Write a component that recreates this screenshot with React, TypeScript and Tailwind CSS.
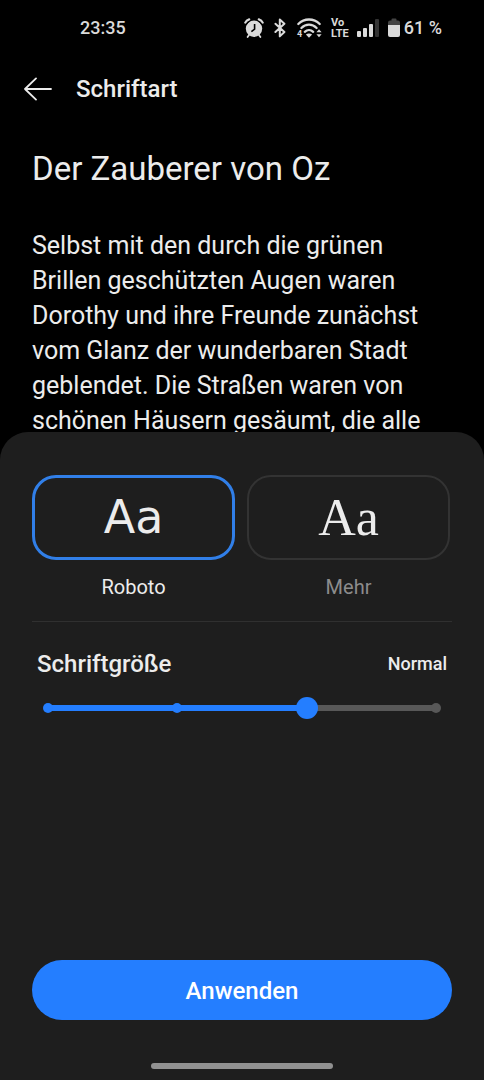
import { useState } from 'react';
import clsx from 'clsx';

const SIZES = ['Sehr klein', 'Klein', 'Normal', 'Groß'];

const FONTS = [
  { id: 'roboto', label: 'Roboto', sample: "font-['DejaVu_Sans',sans-serif] text-[46px]" },
  { id: 'more', label: 'Mehr', sample: "font-['Liberation_Serif',serif] text-[52px]" },
];

function AlarmIcon() {
  return (
    <svg viewBox="0 0 20 20" className="h-5 w-5" fill="none">
      <circle cx="10" cy="10.8" r="8.2" fill="#dadada" />
      <path d="M1.3 4.6Q2.4 2.2 5.2 1.4M18.7 4.6Q17.6 2.2 14.8 1.4" stroke="#dadada" strokeWidth="2.2" strokeLinecap="round" />
      <path d="M2.6 6.4Q4 4 6.6 2.6M17.4 6.4Q16 4 13.4 2.6" stroke="#000" strokeWidth="0.8" />
      <path d="m5 17-1.4 2M15 17l1.4 2" stroke="#dadada" strokeWidth="1.8" strokeLinecap="round" />
      <path d="M10.6 6v5.2L7.4 13.6" stroke="#000" strokeWidth="1.6" />
    </svg>
  );
}

function BluetoothIcon() {
  return (
    <svg viewBox="0 0 12 20" className="h-5 w-3" fill="none" stroke="#dadada" strokeWidth="2">
      <path d="m1.4 5.8 9 8.2-4.6 4.4V1.6l4.6 4.2-9 8.2" strokeLinejoin="round" strokeLinecap="round" />
    </svg>
  );
}

function WifiIcon() {
  return (
    <svg viewBox="0 0 27 22" className="h-[22px] w-[27px]" fill="none">
      <g stroke="#dadada" strokeWidth="2.3" strokeLinecap="round">
        <path d="M2.3 7c6-6 15.4-6 21.4 0" />
        <path d="M5.4 11c4.4-4.4 10.8-4.4 15.2 0" />
        <path d="M8.8 14.8c2.4-2.3 6-2.3 8.4 0" />
      </g>
      <path d="M9.9 17.6c1.9-1.5 4.3-1.5 6.2 0L13 20.8Z" fill="#dadada" />
      <path d="m20.4 15.2 2.6-3 2.6 3ZM20.4 17.2l2.6 3 2.6-3Z" fill="#dadada" />
      <text x="1" y="20" fill="#dadada" fontSize="9" fontWeight="700" fontFamily="Roboto, sans-serif">
        4
      </text>
    </svg>
  );
}

function SignalIcon() {
  return (
    <svg viewBox="0 0 24 20" className="h-5 w-6" fill="#dadada">
      <rect x="0" y="13" width="4" height="6" rx="1" />
      <rect x="6" y="10" width="4" height="9" rx="1" />
      <rect x="12" y="6" width="4" height="13" rx="1" />
      <rect x="18" y="1" width="4" height="18" rx="1" fill="#333" />
    </svg>
  );
}

function BatteryIcon() {
  return (
    <svg viewBox="0 0 12 20" className="h-5 w-3">
      <path d="M3.5 2.5v-1a1 1 0 0 1 1-1h3a1 1 0 0 1 1 1v1H10a2 2 0 0 1 2 2V8H0V4.5a2 2 0 0 1 2-2Z" fill="#444" />
      <path d="M0 7h12v10a2 2 0 0 1-2 2H2a2 2 0 0 1-2-2Z" fill="#dadada" />
    </svg>
  );
}

function StatusBar() {
  return (
    <div className="flex h-14 shrink-0 items-center justify-between pr-[42px] pl-20 text-[#dadada]">
      <span className="text-lg font-medium">23:35</span>
      <div className="flex items-center">
        <AlarmIcon />
        <span className="ml-[10px] flex">
          <BluetoothIcon />
        </span>
        <span className="ml-[10px] flex">
          <WifiIcon />
        </span>
        <span className="ml-2 flex flex-col text-[11px] leading-[11px] font-bold">
          <span>Vo</span>
          <span>LTE</span>
        </span>
        <span className="ml-2 flex">
          <SignalIcon />
        </span>
        <span className="ml-[7px] flex">
          <BatteryIcon />
        </span>
        <span className="ml-1 text-lg font-medium">61 %</span>
      </div>
    </div>
  );
}

function SizeSlider({ value, onChange }: { value: number; onChange: (v: number) => void }) {
  const last = SIZES.length - 1;

  return (
    <div className="relative mt-[17px] flex h-[22px] items-center">
      <div className="mx-[11px] h-[6px] flex-1 bg-[#585858]">
        <div className="h-full bg-[#247eff]" style={{ width: `${(value / last) * 100}%` }} />
      </div>
      <div className="absolute inset-x-[6px] flex justify-between">
        {SIZES.map((size, i) => (
          <span
            key={size}
            className={clsx('size-[10px] rounded-full', i <= value ? 'bg-[#247eff]' : 'bg-[#585858]')}
          />
        ))}
      </div>
      <input
        id="font-size"
        type="range"
        min={0}
        max={last}
        step={1}
        value={value}
        onChange={(e) => onChange(Number(e.target.value))}
        className="absolute inset-0 w-full appearance-none bg-transparent [&::-webkit-slider-thumb]:size-[22px] [&::-webkit-slider-thumb]:appearance-none [&::-webkit-slider-thumb]:rounded-full [&::-webkit-slider-thumb]:bg-[#247eff]"
      />
    </div>
  );
}

export default function App() {
  const [font, setFont] = useState('roboto');
  const [size, setSize] = useState(2);

  return (
    <div className="flex h-screen flex-col bg-black font-[Roboto,sans-serif] text-[#ececec]">
      <div className="flex min-h-0 flex-1 flex-col">
        <StatusBar />
        <header className="flex h-[66px] shrink-0 items-center gap-6 px-6">
          <button type="button" aria-label="Zurück">
            <svg viewBox="0 0 28 24" className="h-6 w-7" fill="none" stroke="currentColor" strokeWidth="1.8">
              <path d="M27 12H1M12 1.4 1 12l11 10.6" strokeLinecap="round" strokeLinejoin="round" />
            </svg>
          </button>
          <h1 className="text-2xl font-medium">Schriftart</h1>
        </header>
        <article className="pt-[27px] pr-12 pl-8">
          <h2 className="text-[33px] leading-10">Der Zauberer von Oz</h2>
          <p className="mt-[39px] text-[25px] leading-[35px]">
            Selbst mit den durch die grünen Brillen geschützten Augen waren Dorothy und ihre Freunde
            zunächst vom Glanz der wunderbaren Stadt geblendet. Die Straßen waren von schönen Häusern
            gesäumt, die alle
          </p>
        </article>
      </div>

      {/* slides over the last line of the preview */}
      <section className="relative flex h-3/5 shrink-0 flex-col rounded-t-[28px] bg-[#1e1e1e] px-8 pt-[43px]">
        <div className="flex gap-3 pr-[2px]">
          {FONTS.map(({ id, label, sample }) => (
            <button
              key={id}
              type="button"
              aria-pressed={font === id}
              onClick={() => setFont(id)}
              className="flex flex-1 flex-col items-center gap-3"
            >
              <span
                className={clsx(
                  'flex h-[85px] w-full items-center justify-center rounded-3xl',
                  font === id ? 'border-3 border-[#317fe8]' : 'border-2 border-[#333]',
                  sample,
                )}
              >
                Aa
              </span>
              <span className={clsx('text-xl leading-[30px]', font !== id && 'text-[#8c8c8c]')}>{label}</span>
            </button>
          ))}
        </div>

        <div className="mt-[19px] border-t border-[#303030] px-[5px] pt-[26px]">
          <div className="flex items-center justify-between">
            <label htmlFor="font-size" className="text-2xl font-medium">
              Schriftgröße
            </label>
            <span className="text-lg font-medium">{SIZES[size]}</span>
          </div>
          <SizeSlider value={size} onChange={setSize} />
        </div>

        <button
          type="button"
          className="mt-auto h-[60px] shrink-0 rounded-full bg-[#247eff] pt-[2px] text-2xl font-medium text-white"
        >
          Anwenden
        </button>
        <div className="mx-auto mt-[43px] mb-[11px] h-[6px] w-[182px] shrink-0 rounded-full bg-[#919191]" />
      </section>
    </div>
  );
}
